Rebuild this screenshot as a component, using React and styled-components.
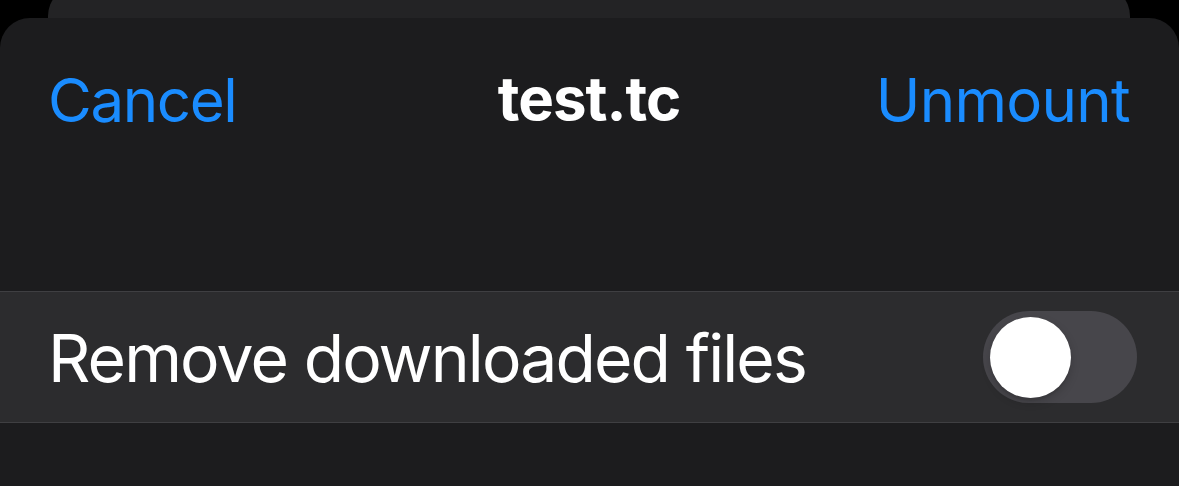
import React, { useState } from "react";
import styled, { createGlobalStyle } from "styled-components";

const Global = createGlobalStyle`
  html, body { margin: 0; padding: 0; background: #000; }
  body { width: 1179px; height: 486px; overflow: hidden; font-family: Inter, "Noto Sans", "Liberation Sans", sans-serif; -webkit-font-smoothing: antialiased; }
`;

const Screen = styled.div`
  width: 1179px;
  height: 486px;
  background: #000;
  display: flex;
  flex-direction: column;
  overflow: hidden;
`;

const BackCard = styled.div`
  height: 32px;
  margin: -14px 49px 0 48px;
  background: #232325;
  border-radius: 30px 30px 0 0;
  flex-shrink: 0;
`;

const Sheet = styled.div`
  flex: 1;
  background: #1c1c1e;
  border-radius: 30px 30px 0 0;
  display: flex;
  flex-direction: column;
`;

const NavBar = styled.div`
  height: 220px;
  padding: 52px 49px 0 48px;
  box-sizing: border-box;
  display: grid;
  grid-template-columns: 1fr auto 1fr;
  align-items: start;
`;

const NavButton = styled.button`
  background: none;
  border: 0;
  padding: 0;
  margin: 0;
  font-family: inherit;
  font-size: 60px;
  line-height: 60px;
  letter-spacing: ${(p) => (p.$end ? "-0.7px" : "-1.4px")};
  color: #1a8cff;
  justify-self: ${(p) => (p.$end ? "end" : "start")};
  cursor: pointer;
`;

const Title = styled.div`
  font-size: 60px;
  line-height: 60px;
  font-weight: 700;
  letter-spacing: -1px;
  color: #fff;
  margin-top: -2px;
`;

const Group = styled.div`
  margin-top: 53px;
  border-top: 1px solid #3f3f42;
  border-bottom: 1px solid #3f3f42;
  background: #2c2c2e;
`;

const Row = styled.div`
  height: 130px;
  padding: 0 42px 0 48px;
  display: flex;
  align-items: center;
  justify-content: space-between;
`;

const Label = styled.span`
  font-size: 66px;
  line-height: 66px;
  letter-spacing: -1.9px;
  color: #fff;
  padding-top: 2px;
`;

const Track = styled.button`
  width: 154px;
  height: 92px;
  border-radius: 46px;
  border: 0;
  padding: 0 7px;
  background: ${(p) => (p.$on ? "#30d158" : "#47464b")};
  display: flex;
  align-items: center;
  justify-content: ${(p) => (p.$on ? "flex-end" : "flex-start")};
  cursor: pointer;
`;

const Knob = styled.span`
  width: 81px;
  height: 81px;
  border-radius: 50%;
  background: #fff;
  box-shadow: 0 4px 10px rgba(0, 0, 0, 0.18), 0 3px 1px rgba(0, 0, 0, 0.06);
`;

export default function App() {
  const [on, setOn] = useState(false);
  return (
    <>
      <Global />
      <Screen>
        <BackCard />
        <Sheet>
          <NavBar>
            <NavButton>Cancel</NavButton>
            <Title>test.tc</Title>
            <NavButton $end>Unmount</NavButton>
          </NavBar>
          <Group>
            <Row>
              <Label>Remove downloaded files</Label>
              <Track $on={on} onClick={() => setOn(!on)} aria-label="Remove downloaded files">
                <Knob />
              </Track>
            </Row>
          </Group>
        </Sheet>
      </Screen>
    </>
  );
}
